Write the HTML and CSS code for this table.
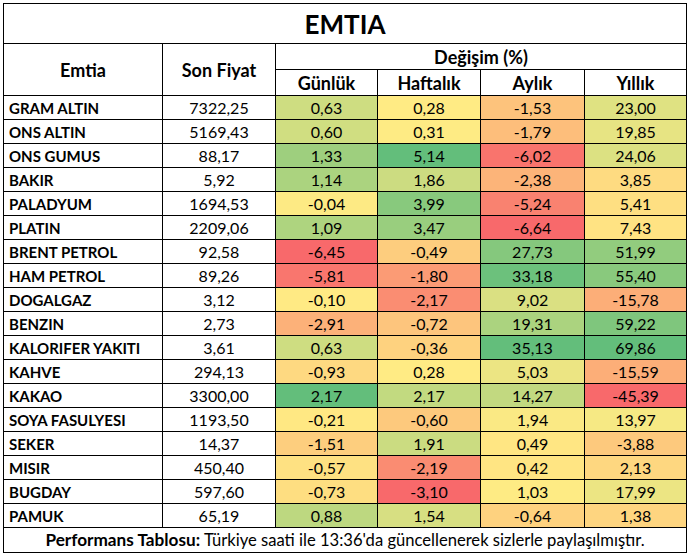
FILE: index.html
```html
<!DOCTYPE html>
<html lang="tr">
<head>
<meta charset="utf-8">
<link rel="stylesheet" href="styles.css">
</head>
<body>
<table class="grid">
<colgroup>
<col class="c-name"><col class="c-price"><col class="c-d"><col class="c-w"><col class="c-m"><col class="c-y">
</colgroup>
<thead>
<tr class="title-row"><th colspan="6" class="title">EMTIA</th></tr>
<tr class="head-row head-top"><th rowspan="2">Emtia</th><th rowspan="2">Son Fiyat</th><th colspan="4">Değişim (%)</th></tr>
<tr class="head-row"><th>Günlük</th><th>Haftalık</th><th>Aylık</th><th>Yıllık</th></tr>
</thead>
<tbody>
<tr><td class="name">GRAM ALTIN</td><td>7322,25</td><td style="background:rgb(206,221,129)">0,63</td><td style="background:rgb(255,235,132)">0,28</td><td style="background:rgb(253,195,124)">-1,53</td><td style="background:rgb(223,226,130)">23,00</td></tr>
<tr><td class="name">ONS ALTIN</td><td>5169,43</td><td style="background:rgb(208,222,129)">0,60</td><td style="background:rgb(254,235,132)">0,31</td><td style="background:rgb(253,190,123)">-1,79</td><td style="background:rgb(231,228,131)">19,85</td></tr>
<tr><td class="name">ONS GUMUS</td><td>88,17</td><td style="background:rgb(158,207,126)">1,33</td><td style="background:rgb(99,190,123)">5,14</td><td style="background:rgb(249,116,109)">-6,02</td><td style="background:rgb(220,225,130)">24,06</td></tr>
<tr><td class="name">BAKIR</td><td>5,92</td><td style="background:rgb(171,211,127)">1,14</td><td style="background:rgb(204,220,129)">1,86</td><td style="background:rgb(252,180,121)">-2,38</td><td style="background:rgb(254,219,129)">3,85</td></tr>
<tr><td class="name">PALADYUM</td><td>1694,53</td><td style="background:rgb(253,234,132)">-0,04</td><td style="background:rgb(136,201,125)">3,99</td><td style="background:rgb(249,130,112)">-5,24</td><td style="background:rgb(254,223,130)">5,41</td></tr>
<tr><td class="name">PLATIN</td><td>2209,06</td><td style="background:rgb(174,212,127)">1,09</td><td style="background:rgb(153,206,126)">3,47</td><td style="background:rgb(248,105,107)">-6,64</td><td style="background:rgb(255,227,131)">7,43</td></tr>
<tr><td class="name">BRENT PETROL</td><td>92,58</td><td style="background:rgb(248,105,107)">-6,45</td><td style="background:rgb(253,205,126)">-0,49</td><td style="background:rgb(133,200,125)">27,73</td><td style="background:rgb(146,204,126)">51,99</td></tr>
<tr><td class="name">HAM PETROL</td><td>89,26</td><td style="background:rgb(249,118,110)">-5,81</td><td style="background:rgb(251,155,117)">-1,80</td><td style="background:rgb(108,193,124)">33,18</td><td style="background:rgb(137,201,125)">55,40</td></tr>
<tr><td class="name">DOGALGAZ</td><td>3,12</td><td style="background:rgb(255,234,132)">-0,10</td><td style="background:rgb(250,141,114)">-2,17</td><td style="background:rgb(218,224,130)">9,02</td><td style="background:rgb(252,174,120)">-15,78</td></tr>
<tr><td class="name">BENZIN</td><td>2,73</td><td style="background:rgb(252,177,121)">-2,91</td><td style="background:rgb(253,197,125)">-0,72</td><td style="background:rgb(171,211,127)">19,31</td><td style="background:rgb(127,198,125)">59,22</td></tr>
<tr><td class="name">KALORIFER YAKITI</td><td>3,61</td><td style="background:rgb(206,221,129)">0,63</td><td style="background:rgb(254,210,127)">-0,36</td><td style="background:rgb(99,190,123)">35,13</td><td style="background:rgb(99,190,123)">69,86</td></tr>
<tr><td class="name">KAHVE</td><td>294,13</td><td style="background:rgb(254,217,129)">-0,93</td><td style="background:rgb(255,235,132)">0,28</td><td style="background:rgb(236,229,131)">5,03</td><td style="background:rgb(252,174,120)">-15,59</td></tr>
<tr><td class="name">KAKAO</td><td>3300,00</td><td style="background:rgb(99,190,123)">2,17</td><td style="background:rgb(194,218,128)">2,17</td><td style="background:rgb(194,217,128)">14,27</td><td style="background:rgb(248,105,107)">-45,39</td></tr>
<tr><td class="name">SOYA FASULYESI</td><td>1193,50</td><td style="background:rgb(255,232,131)">-0,21</td><td style="background:rgb(253,201,125)">-0,60</td><td style="background:rgb(250,233,132)">1,94</td><td style="background:rgb(246,233,132)">13,97</td></tr>
<tr><td class="name">SEKER</td><td>14,37</td><td style="background:rgb(253,206,126)">-1,51</td><td style="background:rgb(203,220,129)">1,91</td><td style="background:rgb(255,230,131)">0,49</td><td style="background:rgb(253,201,125)">-3,88</td></tr>
<tr><td class="name">MISIR</td><td>450,40</td><td style="background:rgb(254,225,130)">-0,57</td><td style="background:rgb(250,140,114)">-2,19</td><td style="background:rgb(255,229,131)">0,42</td><td style="background:rgb(254,215,128)">2,13</td></tr>
<tr><td class="name">BUGDAY</td><td>597,60</td><td style="background:rgb(254,222,129)">-0,73</td><td style="background:rgb(248,105,107)">-3,10</td><td style="background:rgb(254,235,132)">1,03</td><td style="background:rgb(236,229,131)">17,99</td></tr>
<tr><td class="name">PAMUK</td><td>65,19</td><td style="background:rgb(189,216,128)">0,88</td><td style="background:rgb(215,223,130)">1,54</td><td style="background:rgb(254,210,127)">-0,64</td><td style="background:rgb(254,213,128)">1,38</td></tr>
</tbody>
<tfoot>
<tr class="foot-row"><td colspan="6"><b>Performans Tablosu:</b> Türkiye saati ile 13:36'da güncellenerek sizlerle paylaşılmıştır.</td></tr>
</tfoot>
</table>
</body>
</html>
```

FILE: styles.css
```css
html, body {
  margin: 0;
  padding: 0;
  background: #ffffff;
}
body {
  padding: 3px 0 0 3px;
  font-family: Lato, "Open Sans", sans-serif;
  color: #000;
}
.grid {
  border-collapse: collapse;
  table-layout: fixed;
  width: 683px;
  border: 1px solid #000;
}
.c-name { width: 159px; }
.c-price { width: 113px; }
.c-d { width: 102px; }
.c-w { width: 103px; }
.c-m { width: 104px; }
.c-y { width: 102px; }
.grid th, .grid td {
  border: 1px solid #000;
  padding: 0;
  text-align: center;
  vertical-align: middle;
  white-space: nowrap;
}
.title-row th {
  height: 39px;
  font-size: 26px;
  font-weight: 700;
}
.head-row th {
  height: 25px;
  font-size: 18px;
  font-weight: 700;
  line-height: 20px;
}
.head-top th {
  height: 25px;
}
.grid tbody td {
  height: 23px;
  font-size: 16px;
  line-height: 18px;
}
.grid tbody td.name {
  text-align: left;
  padding-left: 5px;
  font-size: 15px;
  font-weight: 700;
}
.foot-row td {
  height: 24px;
  font-size: 16.6px;
  line-height: 18px;
}
.foot-row b {
  font-size: 17.2px;
  font-weight: 700;
}
```
